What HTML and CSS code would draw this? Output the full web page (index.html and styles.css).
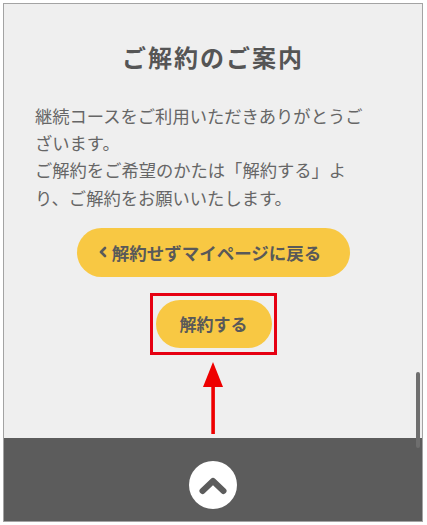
FILE: index.html
```html
<!DOCTYPE html>
<html lang="ja">
<head>
<meta charset="utf-8">
<link rel="stylesheet" href="styles.css">
</head>
<body>
<div class="frame">
  <main class="main">
    <h1 class="title">ご解約のご案内</h1>
    <p class="text">継続コースをご利用いただきありがとうご<br>ざいます。<br>ご解約をご希望のかたは「解約する」よ<br>り、ご解約をお願いいたします。</p>
    <div class="actions">
      <a class="btn btn-back"><svg class="chev" viewBox="0 0 8 12" width="8" height="12"><path d="M6 2 L2 6 L6 10" fill="none" stroke="#5a5a5a" stroke-width="2.6" stroke-linecap="round" stroke-linejoin="round"/></svg>解約せずマイページに戻る</a>
      <div class="highlight"><a class="btn btn-cancel">解約する</a></div>
      <svg class="arrow" viewBox="0 0 24 72" width="24" height="72"><polygon points="12,0 22,25 2,25" fill="#ee0000"/><rect x="10.3" y="22" width="3.6" height="50" fill="#ee0000"/></svg>
    </div>
    <div class="scrollbar"></div>
  </main>
  <footer class="footer">
    <div class="totop"><svg viewBox="0 0 48 48" width="48" height="48"><path d="M13.5 30 L24 20 L34.5 30" fill="none" stroke="#5c5c5c" stroke-width="6" stroke-linecap="round" stroke-linejoin="round"/></svg></div>
  </footer>
</div>
</body>
</html>
```
FILE: styles.css
```css
html, body {
  margin: 0;
  padding: 0;
  background: #ffffff;
}
body {
  font-family: "Noto Sans CJK JP", "Noto Sans", sans-serif;
}
.frame {
  margin: 3px 0 0 3px;
  width: 418px;
  height: 517px;
  border: 1px solid #a3a3a3;
  background: #efefef;
  display: flex;
  flex-direction: column;
  overflow: hidden;
}
.main {
  position: relative;
  height: 434px;
  flex: none;
  display: flex;
  flex-direction: column;
}
.title {
  margin: 36px 0 0;
  font-size: 24px;
  line-height: 34px;
  font-weight: 700;
  color: #555555;
  text-align: center;
  letter-spacing: 2px;
}
.text {
  margin: 28px 0 0;
  padding: 0 20px 0 31px;
  font-size: 17.3px;
  line-height: 27.2px;
  color: #666666;
}
.actions {
  margin-top: 17px;
  display: flex;
  flex-direction: column;
  align-items: center;
}
.btn {
  display: flex;
  align-items: center;
  justify-content: center;
  background: #f8c843;
  color: #595959;
  font-weight: 700;
  font-size: 17.5px;
  border-radius: 25px;
  height: 49px;
}
.btn-back {
  width: 273px;
  gap: 5px;
}
.chev {
  margin-left: -6px;
}
.highlight {
  margin-top: 16px;
  border: 3px solid #e60012;
  padding: 4px 2px 4px 3px;
}
.btn-cancel {
  width: 116px;
  height: 48px;
  font-size: 17px;
}
.arrow {
  margin-top: 7px;
  display: block;
}
.scrollbar {
  position: absolute;
  right: 2px;
  top: 368px;
  width: 4px;
  height: 76px;
  border-radius: 2px;
  background: #6e6e6e;
}
.footer {
  flex: 1;
  background: #5c5c5c;
  display: flex;
  justify-content: center;
  align-items: flex-start;
}
.totop {
  margin-top: 23px;
  width: 48px;
  height: 48px;
  border-radius: 50%;
  background: #ffffff;
}
.totop svg {
  display: block;
}
```
